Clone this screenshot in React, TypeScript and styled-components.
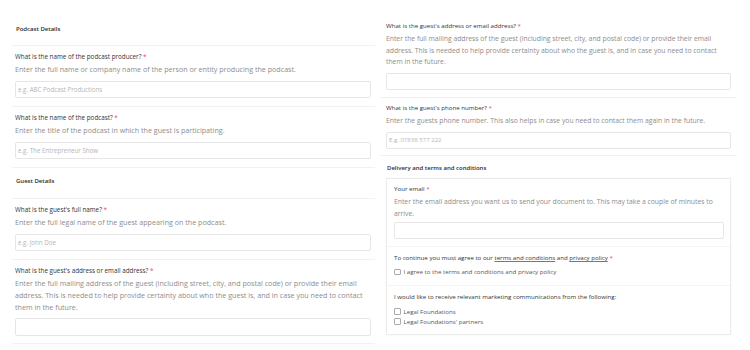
import React from "react";
import styled, { createGlobalStyle } from "styled-components";

const GlobalStyle = createGlobalStyle`
  html, body { margin: 0; padding: 0; background: #ffffff; }
  body { font-family: "Open Sans", "Liberation Sans", sans-serif; color: #333; }
  * { box-sizing: border-box; }
`;

const Page = styled.div`
  display: grid;
  grid-template-columns: 363px 357px;
  column-gap: 5px;
  padding: 0 0 0 12px;
  align-items: start;
  width: 750px;
  height: 350px;
  overflow: hidden;
`;

const Column = styled.div<{ $side: "left" | "right" }>`
  display: flex;
  flex-direction: column;
  padding-top: ${(p) => (p.$side === "left" ? "16px" : "15.5px")};
  --pad-l: ${(p) => (p.$side === "left" ? "3px" : "6px")};
  --pad-r: ${(p) => (p.$side === "left" ? "4px" : "6px")};
  --field-pt: ${(p) => (p.$side === "left" ? "6px" : "5.5px")};
  --field-pb: ${(p) => (p.$side === "left" ? "7.5px" : "6.5px")};
  --input-h: ${(p) => (p.$side === "left" ? "17.5px" : "17px")};
  --fs-label: ${(p) => (p.$side === "left" ? "6.3px" : "6.15px")};
  --fs-desc: ${(p) => (p.$side === "left" ? "7.15px" : "6.8px")};
  --lh-desc: ${(p) => (p.$side === "left" ? "11.9px" : "11.7px")};
`;

const SectionHeading = styled.div<{ $divider?: boolean; $top: number; $bottom: number }>`
  font-size: 6px;
  font-weight: 600;
  line-height: 10px;
  color: #2b2b2b;
  padding: ${(p) => p.$top}px var(--pad-r) ${(p) => p.$bottom}px calc(var(--pad-l) + 1px);
  border-bottom: 1px solid ${(p) => (p.$divider ? "#f1f1f1" : "transparent")};
`;

const Field = styled.div<{ $divider?: boolean }>`
  display: flex;
  flex-direction: column;
  padding: var(--field-pt) var(--pad-r) var(--field-pb) var(--pad-l);
  border-bottom: 1px solid ${(p) => (p.$divider === false ? "transparent" : "#f1f1f1")};
`;

const Label = styled.div`
  font-size: var(--fs-label);
  line-height: 10px;
  color: #333;
  white-space: nowrap;
`;

const Req = styled.span`
  color: #e8485f;
`;

const Desc = styled.div`
  font-size: var(--fs-desc);
  line-height: var(--lh-desc);
  color: #8d8d8d;
  margin-top: 2px;
`;

const Input = styled.input<{ $compact?: boolean }>`
  display: block;
  width: 100%;
  height: ${(p) => (p.$compact ? "16.5px" : "var(--input-h)")};
  margin: ${(p) => (p.$compact ? "3px" : "5px")} 0 0 0;
  border: 1px solid #e6e6e6;
  border-radius: 2px;
  padding: 0 2px;
  font-family: "Open Sans", "Liberation Sans", sans-serif;
  font-size: calc(var(--fs-label) - 0.1px);
  color: #333;
  background: #fff;
  outline: none;
  &::placeholder { color: #b6b6b6; }
`;

const Panel = styled.div`
  margin: 0 var(--pad-r) 0 var(--pad-l);
  border: 1px solid #ececec;
  box-shadow: 0 0 2px rgba(0, 0, 0, 0.05);
  display: flex;
  flex-direction: column;
`;

const PanelSection = styled.div<{ $top: number; $bottom: number; $last?: boolean }>`
  display: flex;
  flex-direction: column;
  padding: ${(p) => p.$top}px 6px ${(p) => p.$bottom}px 7px;
  border-bottom: 1px solid ${(p) => (p.$last ? "transparent" : "#f3f3f3")};
`;

const TextLink = styled.a`
  color: #333;
  text-decoration: underline;
  text-decoration-color: #777;
  text-underline-offset: 1px;
`;

const CheckList = styled.div<{ $gapTop: number }>`
  display: flex;
  flex-direction: column;
  margin-top: ${(p) => p.$gapTop}px;
`;

const CheckRow = styled.label`
  display: flex;
  align-items: center;
  gap: 3px;
  font-size: 6.15px;
  line-height: 10px;
  color: #555;
  white-space: nowrap;
`;

const Box = styled.span`
  display: inline-block;
  width: 6.5px;
  height: 6.5px;
  border: 1px solid #ababab;
  border-radius: 1px;
  background: #fff;
  flex: none;
`;

type Q = { label: string; desc: string; placeholder?: string; divider?: boolean };

const Question = ({ label, desc, placeholder, divider }: Q) => (
  <Field $divider={divider}>
    <Label>
      {label} <Req>*</Req>
    </Label>
    <Desc>{desc}</Desc>
    <Input placeholder={placeholder} readOnly />
  </Field>
);

const addressDesc =
  "Enter the full mailing address of the guest (including street, city, and postal code) or provide their email address. This is needed to help provide certainty about who the guest is, and in case you need to contact them in the future.";

export default function App() {
  return (
    <>
      <GlobalStyle />
      <Page>
        <Column $side="left">
          <SectionHeading $divider $top={8} $bottom={11}>
            Podcast Details
          </SectionHeading>
          <Question
            label="What is the name of the podcast producer?"
            desc="Enter the full name or company name of the person or entity producing the podcast."
            placeholder="e.g. ABC Podcast Productions"
          />
          <Question
            label="What is the name of the podcast?"
            desc="Enter the title of the podcast in which the guest is participating."
            placeholder="e.g. The Entrepreneur Show"
          />
          <SectionHeading $divider $top={8} $bottom={12}>
            Guest Details
          </SectionHeading>
          <Question
            label="What is the guest's full name?"
            desc="Enter the full legal name of the guest appearing on the podcast."
            placeholder="e.g. John Doe"
          />
          <Question label="What is the guest's address or email address?" desc={addressDesc} />
        </Column>

        <Column $side="right">
          <Question label="What is the guest's address or email address?" desc={addressDesc} />
          <Question
            label="What is the guest's phone number?"
            desc="Enter the guests phone number. This also helps in case you need to contact them again in the future."
            placeholder="E.g. 07838 577 222"
          />
          <SectionHeading $top={7} $bottom={3.5}>
            Delivery and terms and conditions
          </SectionHeading>
          <Panel>
            <PanelSection $top={5} $bottom={7.5}>
              <Label>
                Your email <Req>*</Req>
              </Label>
              <Desc>
                Enter the email address you want us to send your document to. This may take a couple of minutes to
                arrive.
              </Desc>
              <Input $compact readOnly />
            </PanelSection>
            <PanelSection $top={6} $bottom={8}>
              <Label>
                To continue you must agree to our <TextLink>terms and conditions</TextLink> and{" "}
                <TextLink>privacy policy</TextLink> <Req>*</Req>
              </Label>
              <CheckList $gapTop={4}>
                <CheckRow>
                  <Box />I agree to the terms and conditions and privacy policy
                </CheckRow>
              </CheckList>
            </PanelSection>
            <PanelSection $top={6} $bottom={6.5} $last>
              <Label>I would like to receive relevant marketing communications from the following:</Label>
              <CheckList $gapTop={4.5}>
                <CheckRow>
                  <Box />
                  Legal Foundations
                </CheckRow>
                <CheckRow>
                  <Box />
                  Legal Foundations' partners
                </CheckRow>
              </CheckList>
            </PanelSection>
          </Panel>
        </Column>
      </Page>
    </>
  );
}
